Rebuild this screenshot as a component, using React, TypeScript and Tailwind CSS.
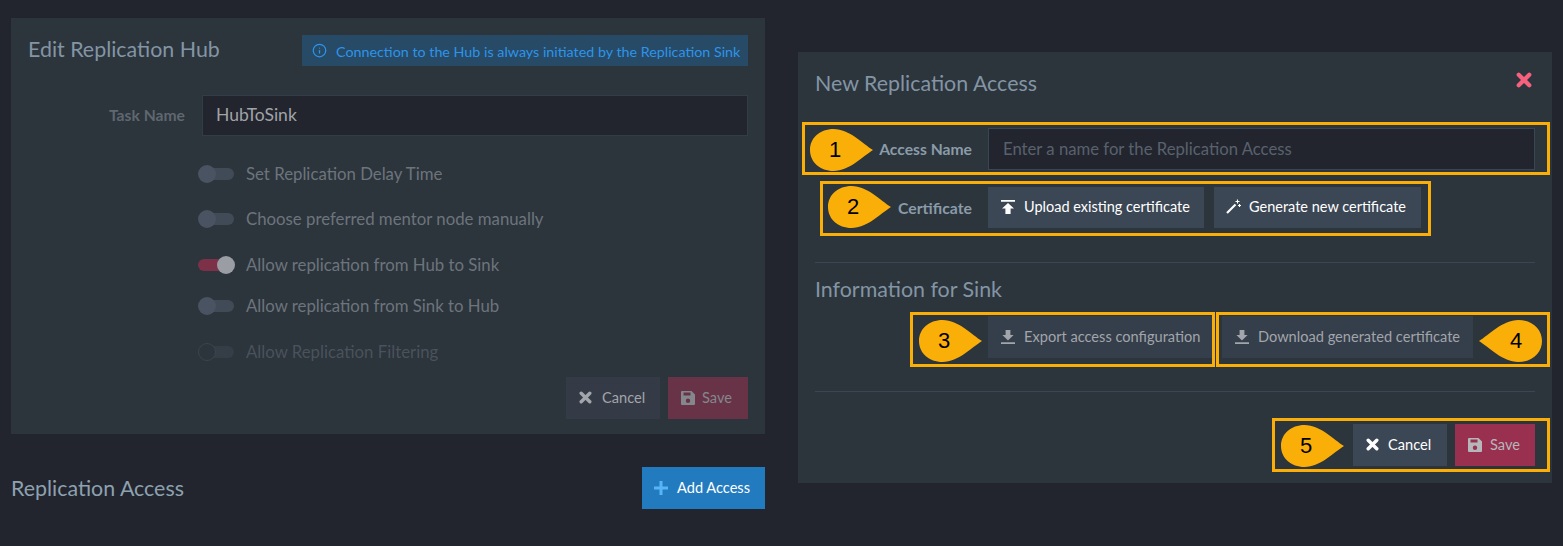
import { Info } from 'lucide-react';

const TOGGLES = [
  { label: 'Set Replication Delay Time', state: 'off', mt: 'mt-[26px]' },
  { label: 'Choose preferred mentor node manually', state: 'off', mt: 'mt-[22px]' },
  { label: 'Allow replication from Hub to Sink', state: 'on', mt: 'mt-[23px]' },
  { label: 'Allow replication from Sink to Hub', state: 'off', mt: 'mt-[18px]' },
  { label: 'Allow Replication Filtering', state: 'disabled', mt: 'mt-[23px]' },
];

function Toggle({ label, state, mt }: { label: string; state: string; mt: string }) {
  return (
    <div className={`flex h-[23px] items-center ${mt}`}>
      <div className="relative h-[12px] w-[36px]">
        {state === 'on' && <div className="h-full w-full rounded-full bg-[#7d3149]" />}
        {state === 'off' && <div className="ml-[8px] h-full w-[28px] rounded-r-full bg-[#414a57]" />}
        {state === 'disabled' && <div className="ml-[8px] h-full w-[28px] rounded-r-full bg-[#353d47]" />}
        {state === 'on' && <div className="absolute left-[19px] top-[-3px] h-[18px] w-[18px] rounded-full bg-[#9a9da3]" />}
        {state === 'off' && <div className="absolute left-0 top-[-3px] h-[18px] w-[18px] rounded-full bg-[#4a5362]" />}
        {state === 'disabled' && <div className="absolute left-0 top-[-3px] h-[18px] w-[18px] rounded-full border border-[#3b444f] bg-[#2c343c]" />}
      </div>
      <span className={`ml-[12px] text-[16.8px] ${state === 'disabled' ? 'text-[#4a525b]' : 'text-[#6c747c]'}`}>{label}</span>
    </div>
  );
}

function Callout({ n, flip, className }: { n: number; flip?: boolean; className: string }) {
  return (
    <div className={`absolute h-[42px] w-[63px] ${className}`}>
      <svg viewBox="0 0 64 42" preserveAspectRatio="none" className="absolute inset-0 h-full w-full">
        {flip ? (
          <path d="M0 21 C10 15 24 0 40 0 C54 0 64 9 64 21 C64 33 54 42 40 42 C24 42 10 27 0 21 Z" fill="#f9ae08" />
        ) : (
          <path d="M64 21 C54 15 40 0 24 0 C10 0 0 9 0 21 C0 33 10 42 24 42 C40 42 54 27 64 21 Z" fill="#f9ae08" />
        )}
      </svg>
      <span className={`absolute top-[8px] font-['Liberation_Sans',sans-serif] text-[22px] leading-[26px] text-black ${flip ? 'left-[31px]' : 'left-[19px]'}`}>{n}</span>
    </div>
  );
}

function CrossIcon({ size = 13 }: { size?: number }) {
  return (
    <svg viewBox="0 0 13 13" width={size} height={size} className="shrink-0">
      <path d="M2.2 2.2 L10.8 10.8 M10.8 2.2 L2.2 10.8" stroke="currentColor" strokeWidth="3.4" strokeLinecap="round" />
    </svg>
  );
}

function SaveIcon() {
  return (
    <svg viewBox="0 0 14 14" width={14} height={14} className="shrink-0">
      <path
        fillRule="evenodd"
        d="M0 1 Q0 0 1 0 L10.5 0 L14 3.5 L14 13 Q14 14 13 14 L1 14 Q0 14 0 13 Z M2.5 1.5 L2.5 4.5 L9.5 4.5 L9.5 1.5 Z M7 7.5 A2.2 2.2 0 1 0 7 11.9 A2.2 2.2 0 1 0 7 7.5 Z"
        fill="currentColor"
      />
    </svg>
  );
}

function UploadIcon() {
  return (
    <svg viewBox="0 0 14 14" width={14} height={14} className="shrink-0">
      <path d="M0 0 H14 V1.8 H0 Z M7 3 L13 8.6 H9.6 V14 H4.4 V8.6 H1 Z" fill="currentColor" />
    </svg>
  );
}

function DownloadIcon() {
  return (
    <svg viewBox="0 0 14 14" width={14} height={14} className="shrink-0">
      <path d="M0 12.2 H14 V14 H0 Z M4.6 0 H9.4 V5 H12.6 L7 10.6 L1.4 5 H4.6 Z" fill="currentColor" />
    </svg>
  );
}

function WandIcon() {
  return (
    <svg viewBox="0 0 15 15" width={15} height={15} className="shrink-0">
      <path d="M1 14 L9.5 5.5" stroke="currentColor" strokeWidth="2.2" />
      <path d="M11.5 0.5 V4.5 M9.5 2.5 H13.5 M13.5 5 V8 M12 6.5 H15" stroke="currentColor" strokeWidth="1.1" />
    </svg>
  );
}

function PlusIcon() {
  return (
    <svg viewBox="0 0 14 14" width={14} height={14} className="shrink-0">
      <path d="M5.5 0 H8.5 V5.5 H14 V8.5 H8.5 V14 H5.5 V8.5 H0 V5.5 H5.5 Z" fill="#58b4f8" />
    </svg>
  );
}

export default function App() {
  return (
    <div className="flex h-[546px] w-[1563px] overflow-hidden bg-[#22252d] font-['Lato',sans-serif]">
      <div className="ml-[11px] mt-[18px] w-[754px]">
        <div className="h-[416px] bg-[#2c343c] px-[17px] pt-[17px]">
          <div className="flex items-start justify-between">
            <h2 className="text-[21.4px] leading-[28px] text-[#8395a4]">Edit Replication Hub</h2>
            <div className="flex h-[31px] w-[446px] items-center bg-[#274a66] pl-[10px] text-[14.3px] text-[#2d94ea]">
              <Info size={15} className="mr-[9px]" />
              <span className="mt-[2px]">Connection to the Hub is always initiated by the Replication Sink</span>
            </div>
          </div>
          <div className="mt-[29px] flex items-center">
            <label className="w-[157px] text-right text-[15.7px] font-bold text-[#5f676f]">Task Name</label>
            <div className="ml-[17px] flex h-[41px] flex-1 items-center border border-[#333d48] bg-[#22252d] pl-[13px] text-[17.5px] text-[#a0a3a8]">HubToSink</div>
          </div>
          <div className="ml-[170px]">
            {TOGGLES.map((t) => (
              <Toggle key={t.label} {...t} />
            ))}
          </div>
          <div className="mt-[14px] flex justify-end gap-[8px]">
            <button className="flex h-[42px] w-[94px] items-center gap-[10px] bg-[#353b46] pb-[1px] pl-[13px] text-[14.6px] text-[#a2a5aa]">
              <CrossIcon />
              Cancel
            </button>
            <button className="flex h-[42px] w-[80px] items-center gap-[7px] bg-[#683347] pb-[1px] pl-[13px] text-[14.6px] text-[#84878c]">
              <SaveIcon />
              Save
            </button>
          </div>
        </div>
        <div className="mt-[33px] flex items-center justify-between">
          <h2 className="text-[21.4px] text-[#8ea1b0]">Replication Access</h2>
          <button className="flex h-[42px] w-[123px] items-center gap-[9px] bg-[#227abf] pb-[1px] pl-[12px] text-[14.6px] text-white">
            <PlusIcon />
            Add Access
          </button>
        </div>
      </div>

      <div className="relative ml-[33px] mt-[52px] h-[431px] w-[754px] bg-[#2c343c] px-[17px]">
        <div className="flex items-center justify-between pt-[17px]">
          <h2 className="text-[21.4px] leading-[28px] text-[#8395a4]">New Replication Access</h2>
          <span className="mr-[3px] mt-[-6px] text-[#f5617f]">
            <CrossIcon size={16} />
          </span>
        </div>
        <div className="mt-[31px] flex items-center">
          <label className="mt-[1px] w-[157px] text-right text-[15.7px] font-bold text-[#8a9ba9]">Access Name</label>
          <div className="ml-[16px] flex h-[42px] flex-1 items-center border border-[#3a4654] bg-[#22252d] pl-[14px] pt-[2px] text-[16.7px] text-[#59616d]">Enter a name for the Replication Access</div>
        </div>
        <div className="mt-[17px] flex items-center">
          <label className="w-[157px] text-right text-[15.8px] font-bold text-[#8a9ba9]">Certificate</label>
          <button className="ml-[16px] flex h-[41px] w-[216px] items-center gap-[9px] bg-[#3c4755] pb-[2px] pl-[13px] text-[14.5px] text-white">
            <UploadIcon />
            Upload existing certificate
          </button>
          <button className="ml-[10px] flex h-[41px] w-[207px] items-center gap-[8px] bg-[#3c4755] pb-[2px] pl-[12px] text-[14.5px] text-white">
            <WandIcon />
            Generate new certificate
          </button>
        </div>
        <div className="mt-[34px] border-t border-[#3a4654]" />
        <h2 className="mt-[12px] text-[21.4px] leading-[28px] text-[#8395a4]">Information for Sink</h2>
        <div className="ml-[173px] mt-[13px] flex">
          <button className="flex h-[42px] w-[226px] items-center gap-[9px] bg-[#353e4b] pb-[1px] pl-[13px] text-[14.6px] text-[#a2a5aa]">
            <DownloadIcon />
            Export access configuration
          </button>
          <button className="ml-[8px] flex h-[42px] w-[251px] items-center gap-[9px] bg-[#353e4b] pb-[1px] pl-[13px] text-[14.6px] text-[#a2a5aa]">
            <DownloadIcon />
            Download generated certificate
          </button>
        </div>
        <div className="mt-[33px] border-t border-[#3a4654]" />
        <div className="mt-[32px] flex justify-end gap-[8px]">
          <button className="flex h-[42px] w-[94px] items-center gap-[9px] bg-[#3c4755] pb-[1px] pl-[13px] text-[14.6px] text-white">
            <CrossIcon />
            Cancel
          </button>
          <button className="flex h-[42px] w-[80px] items-center gap-[8px] bg-[#99304f] pb-[1px] pl-[13px] text-[14.6px] text-[#b5b7bb]">
            <SaveIcon />
            Save
          </button>
        </div>

        <div className="absolute left-[4px] top-[70px] h-[53px] w-[748px] border-[3px] border-[#f9ae08]" />
        <div className="absolute left-[22px] top-[129px] h-[55px] w-[611px] border-[3px] border-[#f9ae08]" />
        <div className="absolute left-[112px] top-[260px] h-[55px] w-[305px] border-[3px] border-[#f9ae08]" />
        <div className="absolute left-[418px] top-[260px] h-[55px] w-[334px] border-[3px] border-[#f9ae08]" />
        <div className="absolute left-[474px] top-[366px] h-[54px] w-[278px] border-[3px] border-[#f9ae08]" />
        <Callout n={1} className="left-[12px] top-[77px]" />
        <Callout n={2} className="left-[30px] top-[134px]" />
        <Callout n={3} className="left-[121px] top-[268px]" />
        <Callout n={4} flip className="left-[681px] top-[268px]" />
        <Callout n={5} className="left-[483px] top-[373px]" />
      </div>
    </div>
  );
}
